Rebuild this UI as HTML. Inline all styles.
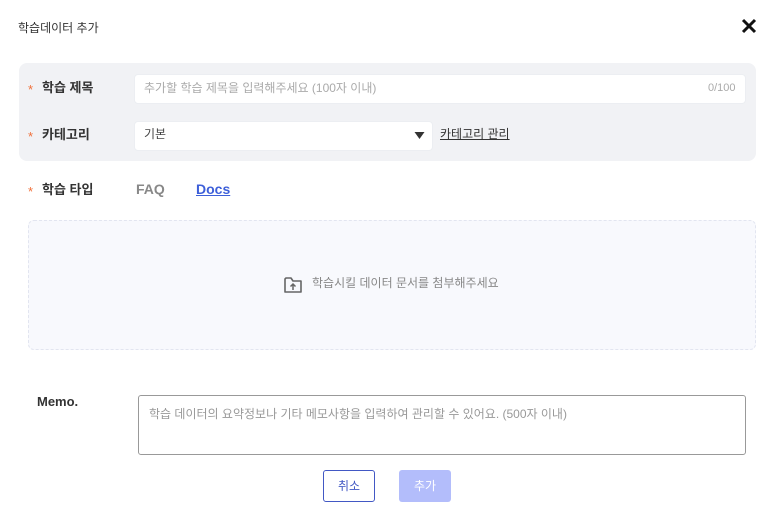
<!DOCTYPE html>
<html><head><meta charset="utf-8"><style>
*{box-sizing:border-box;margin:0;padding:0}
body{width:773px;height:521px;background:#fff;font-family:"Liberation Sans","Noto Sans CJK KR",sans-serif;position:relative;overflow:hidden;color:#222;line-height:1.2}
.a{position:absolute}
.star{color:#f0703a;font-size:13px}
.lbl{font-size:13px;font-weight:bold;color:#333}
</style></head><body>
<div class="a" style="left:18px;top:21px;font-size:12px;color:#333">학습데이터 추가</div>
<svg class="a" style="left:741px;top:18px" width="16" height="16" viewBox="0 0 16 16"><path d="M2 2L14 14M14 2L2 14" stroke="#111" stroke-width="3"/></svg>
<div class="a" style="left:19px;top:63px;width:737px;height:98px;background:#f1f2f5;border-radius:8px"></div>
<div class="a star" style="left:28px;top:82px">*</div>
<div class="a lbl" style="left:42px;top:80px">학습 제목</div>
<div class="a" style="left:134px;top:74px;width:612px;height:30px;background:#fff;border-radius:4px;border:1px solid #eceef2"></div>
<div class="a" style="left:144px;top:81px;font-size:12px;color:#aaa">추가할 학습 제목을 입력해주세요 (100자 이내)</div>
<div class="a" style="left:708px;top:82px;font-size:11px;color:#aaa">0/100</div>
<div class="a star" style="left:28px;top:129px">*</div>
<div class="a lbl" style="left:42px;top:127px">카테고리</div>
<div class="a" style="left:134px;top:121px;width:299px;height:30px;background:#fff;border-radius:4px;border:1px solid #eceef2"></div>
<div class="a" style="left:144px;top:127px;font-size:12px;color:#444">기본</div>
<svg class="a" style="left:414px;top:131px" width="11" height="9" viewBox="0 0 11 9"><path d="M0.5 1H10.5L5.5 8Z" fill="#333"/></svg>
<div class="a" style="left:440px;top:127px;font-size:12px;color:#333;text-decoration:underline">카테고리 관리</div>
<div class="a star" style="left:28px;top:184px">*</div>
<div class="a lbl" style="left:42px;top:182px">학습 타입</div>
<div class="a" style="left:136px;top:181px;font-size:14px;font-weight:bold;color:#888">FAQ</div>
<div class="a" style="left:196px;top:181px;font-size:14px;font-weight:bold;color:#3d5fd9;text-decoration:underline">Docs</div>
<div class="a" style="left:28px;top:220px;width:728px;height:130px;background:#f8f9fd;border:1.5px dashed #e2e5f0;border-radius:6px"></div>
<svg class="a" style="left:283px;top:275px" width="20" height="20" viewBox="0 0 20 20"><path d="M2 4V17H18V6H10L8 3H3Z" fill="none" stroke="#666" stroke-width="1.6" stroke-linejoin="round"/><path d="M10 15V9M7.5 11.5L10 9L12.5 11.5" fill="none" stroke="#666" stroke-width="1.5"/></svg>
<div class="a" style="left:312px;top:276px;font-size:12px;color:#888">학습시킬 데이터 문서를 첨부해주세요</div>
<div class="a" style="left:37px;top:394px;font-size:13px;font-weight:bold;color:#333">Memo.</div>
<div class="a" style="left:138px;top:395px;width:608px;height:60px;border:1px solid #999;border-radius:3px"></div>
<div class="a" style="left:149px;top:407px;font-size:12px;color:#999">학습 데이터의 요약정보나 기타 메모사항을 입력하여 관리할 수 있어요. (500자 이내)</div>
<div class="a" style="left:323px;top:470px;width:52px;height:32px;border:1px solid #4258c4;border-radius:3px;font-size:12px;color:#4258c4;text-align:center;line-height:30px">취소</div>
<div class="a" style="left:399px;top:470px;width:52px;height:32px;background:#b3bdfb;border-radius:3px;font-size:12px;color:#fff;text-align:center;line-height:32px">추가</div>
</body></html>
